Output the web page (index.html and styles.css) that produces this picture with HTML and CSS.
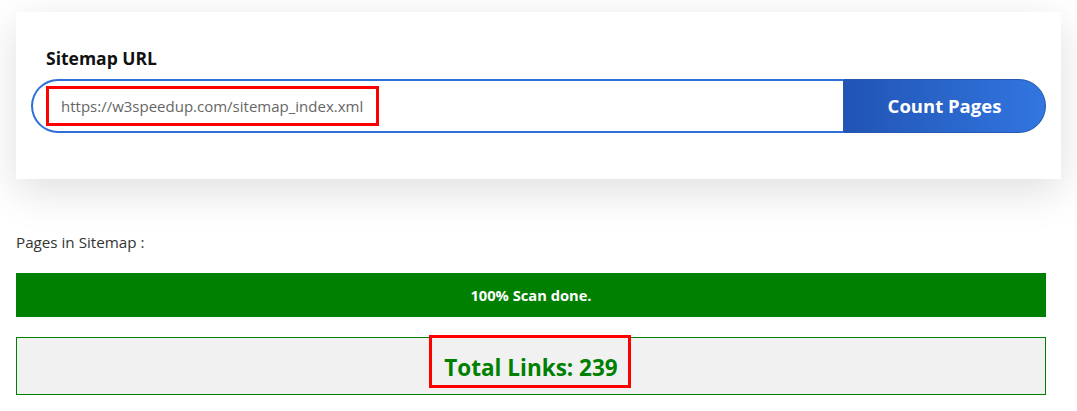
FILE: index.html
```html
<!DOCTYPE html>
<html lang="en">
<head>
<meta charset="utf-8">
<title>Sitemap Page Counter</title>
<link rel="stylesheet" href="styles.css">
</head>
<body>
<div class="page">
  <section class="card">
    <div class="label">Sitemap URL</div>
    <div class="url-group">
      <div class="url-field"><span class="url-text">https://w3speedup.com/sitemap_index.xml</span></div>
      <button class="count-btn">Count Pages</button>
    </div>
  </section>
  <div class="results">
    <p class="pages-label">Pages in Sitemap :</p>
    <div class="progress">100% Scan done.</div>
    <div class="total">
      <span class="total-text">Total Links: 239</span>
      <span class="highlight"></span>
    </div>
  </div>
</div>
</body>
</html>
```

FILE: styles.css
```css
* { box-sizing: border-box; }
html, body { margin: 0; background: #fff; }
body {
  font-family: "Open Sans", "Noto Sans", "Liberation Sans", sans-serif;
  color: #333;
}
.page {
  padding: 12px 0 0 16px;
}
.card {
  width: 1045px;
  height: 167px;
  background: #fff;
  padding: 35px 15px 0 15px;
  box-shadow: 0 12px 40px rgba(0, 0, 0, 0.13);
}
.label {
  font-size: 17.5px;
  font-weight: 700;
  color: #111;
  line-height: 22px;
  margin: 0 0 10px 15px;
}
.url-group {
  display: flex;
  height: 54px;
}
.url-field {
  flex: 1;
  display: flex;
  align-items: center;
  border: 2px solid #2e6fd8;
  border-right: none;
  border-radius: 27px 0 0 27px;
  padding-left: 13px;
}
.url-text {
  display: flex;
  align-items: center;
  width: 333px;
  height: 40px;
  border: 3px solid #f00;
  padding-left: 12px;
  font-size: 15px;
  color: #666;
  white-space: nowrap;
}
.count-btn {
  width: 203px;
  height: 54px;
  border: 1px solid #2455b0;
  border-radius: 0 27px 27px 0;
  background: linear-gradient(to right, #2154b4, #3276e0);
  color: #fff;
  font-family: inherit;
  font-size: 18.5px;
  font-weight: 700;
  padding: 0 0 2px 0;
}
.results {
  width: 1030px;
}
.pages-label {
  margin: 53px 0 0 0;
  font-size: 15.2px;
  line-height: 20px;
  color: #333;
}
.progress {
  margin-top: 21px;
  height: 44px;
  background: #008000;
  color: #fff;
  font-size: 14.7px;
  font-weight: 700;
  display: flex;
  align-items: center;
  justify-content: center;
}
.total {
  position: relative;
  margin-top: 20px;
  height: 58px;
  background: #f1f1f1;
  border: 1px solid #008000;
  display: flex;
  align-items: center;
  justify-content: center;
}
.total-text {
  font-size: 22.5px;
  font-weight: 700;
  color: #008000;
  padding-top: 2px;
}
.highlight {
  position: absolute;
  left: 412px;
  top: -3px;
  width: 202px;
  height: 53px;
  border: 3px solid #f00;
}
```
